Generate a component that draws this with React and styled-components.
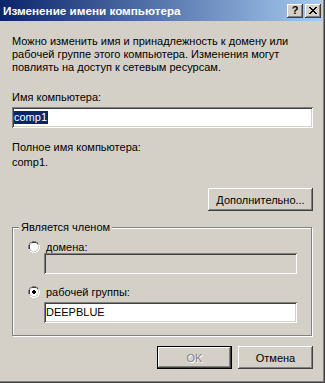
import React from 'react';
import styled, { createGlobalStyle } from 'styled-components';

const Global = createGlobalStyle`
  html, body { margin: 0; padding: 0; background: #d4d0c8; }
  body {
    width: 325px; height: 383px; overflow: hidden;
    font-family: "Liberation Sans", Arial, sans-serif;
    font-size: 11px; color: #000;
  }
`;

const Window = styled.div`
  width: 325px; height: 383px; box-sizing: border-box;
  padding: 0 3px 2px 0;
  background: #d4d0c8;
  box-shadow: inset -1px -1px 0 #404040, inset -2px -2px 0 #808080;
  display: flex; flex-direction: column;
`;

const TitleBar = styled.div`
  height: 21px; flex: none;
  display: flex; align-items: center;
  padding: 0 1px 0 3px;
  background: linear-gradient(to right, #0a246a, #a6caf0);
  color: #fff; font-weight: bold; font-size: 11.7px;
`;

const Title = styled.span`
  flex: 1; white-space: nowrap;
`;

const CapButtons = styled.div`
  display: flex; gap: 2px;
`;

const CapButton = styled.div`
  width: 16px; height: 14px; box-sizing: border-box;
  background: #d4d0c8; color: #000;
  box-shadow: inset -1px -1px 0 #404040, inset 1px 1px 0 #fff, inset -2px -2px 0 #808080;
  display: flex; align-items: center; justify-content: center;
  font-size: 11px; font-weight: bold; line-height: 1;
`;

const Body = styled.div`
  flex: 1; display: flex; flex-direction: column;
  padding: 14px 9px 0 12px;
`;

const Text = styled.div`
  line-height: 13px; white-space: nowrap;
  margin-top: ${p => p.$mt || 0}px;
`;

const Field = styled.div`
  height: 21px; box-sizing: border-box;
  margin-top: ${p => p.$mt || 0}px;
  margin-left: ${p => p.$ml || 0}px;
  margin-right: ${p => p.$mr || 0}px;
  padding: 0 2px;
  background: ${p => (p.$disabled ? '#d4d0c8' : '#fff')};
  box-shadow: inset 1px 1px 0 #808080, inset -1px -1px 0 #fff, inset 2px 2px 0 #404040, inset -2px -2px 0 #d4d0c8;
  display: flex; align-items: center;
  line-height: 13px; white-space: nowrap;
`;

const Selected = styled.span`
  background: #0a246a; color: #fff; padding-right: 1px;
`;

const Row = styled.div`
  display: flex; justify-content: flex-end; gap: 6px;
  margin-top: ${p => p.$mt || 0}px;
`;

const Button = styled.div`
  width: ${p => p.$w || 75}px; height: 23px; box-sizing: border-box;
  display: flex; align-items: center; justify-content: center;
  background: #d4d0c8;
  border: ${p => (p.$default ? '1px solid #000' : 'none')};
  box-shadow: inset -1px -1px 0 #404040, inset 1px 1px 0 #fff, inset -2px -2px 0 #808080;
  color: ${p => (p.$disabled ? '#808080' : '#000')};
  text-shadow: ${p => (p.$disabled ? '1px 1px 0 #fff' : 'none')};
  white-space: nowrap;
`;

const Group = styled.fieldset`
  margin: 10px 0 0 0; padding: 0 0 12px 0; min-width: 0;
  border: 1px solid #808080;
  box-shadow: inset 1px 1px 0 #fff, 1px 1px 0 #fff;
  margin-right: 1px;
`;

const Legend = styled.legend`
  margin-left: 6px; padding: 0 2px;
  background: #d4d0c8; line-height: 13px;
`;

const RadioRow = styled.div`
  display: flex; align-items: center; gap: 6px;
  margin-top: ${p => p.$mt || 0}px;
  margin-left: 15px; height: 13px;
`;

const RadioIcon = ({ checked }) => (
  <svg width="12" height="12" viewBox="0 0 12 12" shapeRendering="crispEdges">
    <path d="M4 0h4v1h2v1H8V1H4v1H2v2H1v4H0V4h1V2h1V1h2z" fill="#808080" />
    <path d="M4 1h4v1h2v1H9V2H3v1H2v1v4H1V4h1V3h1V2h1z" fill="#404040" />
    <path d="M11 4h1v4h-1v2h-1v1H8v1H4v-1H2v-1h2v1h4v-1h2V8h1z" fill="#fff" />
    <path d="M10 4h1v4h-1v2H8v1H4v-1H2V9h2v1h4V9h2V8z" fill="#d4d0c8" />
    <path d="M4 2h4v1h1v1h1v4H9v1H8v1H4V9H3V8H2V4h1V3h1z" fill="#fff" />
    {checked && <path d="M5 4h2v1h1v2H7v1H5V7H4V5h1z" fill="#000" />}
  </svg>
);

const Radio = styled.span`
  width: 12px; height: 12px; display: inline-flex; flex: none;
`;

export default function App() {
  return (
    <>
      <Global />
      <Window>
        <TitleBar>
          <Title>Изменение имени компьютера</Title>
          <CapButtons>
            <CapButton>?</CapButton>
            <CapButton>
              <svg width="8" height="7" viewBox="0 0 8 7" shapeRendering="crispEdges">
                <path d="M0 0h2v1h1v1h2V1h1V0h2v1H7v1H6v1H5v1h1v1h1v1h1v1H6V6H5V5H3v1H2v1H0V6h1V5h1V4h1V3H2V2H1V1H0z" fill="#000" />
              </svg>
            </CapButton>
          </CapButtons>
        </TitleBar>
        <Body>
          <Text>
            Можно изменить имя и принадлежность к домену или<br />
            рабочей группе этого компьютера. Изменения могут<br />
            повлиять на доступ к сетевым ресурсам.
          </Text>
          <Text $mt={17}>Имя компьютера:</Text>
          <Field $mt={3}><Selected>comp1</Selected></Field>
          <Text $mt={13}>Полное имя компьютера:</Text>
          <Text $mt={2}>comp1.</Text>
          <Row $mt={19}>
            <Button $w={105}>Дополнительно...</Button>
          </Row>
          <Group>
            <Legend>Является членом</Legend>
            <RadioRow $mt={6}>
              <Radio><RadioIcon /></Radio>
              домена:
            </RadioRow>
            <Field $disabled $ml={31} $mr={14}></Field>
            <RadioRow $mt={11}>
              <Radio><RadioIcon checked /></Radio>
              рабочей группы:
            </RadioRow>
            <Field $mt={4} $ml={31} $mr={14}>DEEPBLUE</Field>
          </Group>
          <Row $mt={10}>
            <Button $default $disabled>OK</Button>
            <Button>Отмена</Button>
          </Row>
        </Body>
      </Window>
    </>
  );
}
